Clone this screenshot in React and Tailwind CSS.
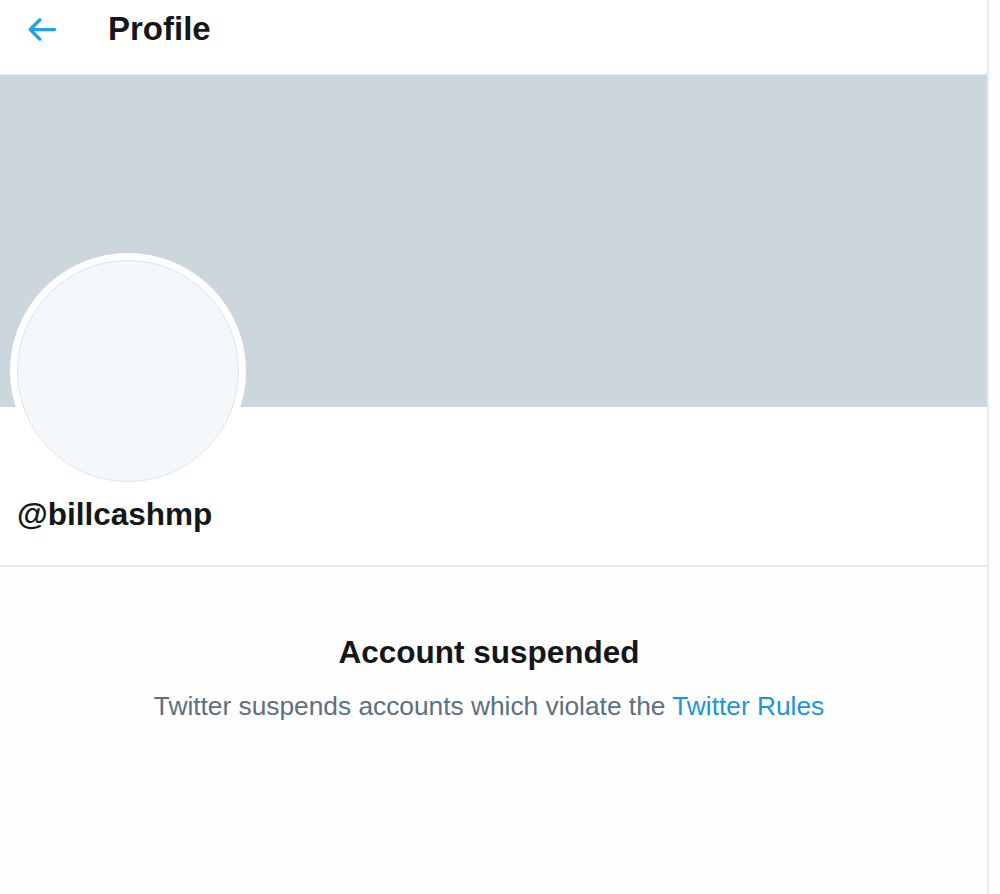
import React from 'react';

const BackArrow = () => (
  <svg viewBox="0 0 24 24" className="w-[39px] h-[39px] fill-[#1da1f2]">
    <path d="M20 11H7.414l4.293-4.293c.39-.39.39-1.023 0-1.414s-1.023-.39-1.414 0l-6 6c-.39.39-.39 1.023 0 1.414l6 6c.195.195.45.293.707.293s.512-.098.707-.293c.39-.39.39-1.023 0-1.414L7.414 13H20c.553 0 1-.447 1-1s-.447-1-1-1z" />
  </svg>
);

const App = () => {
  return (
    <div className="w-[1000px] h-[894px] bg-[#fefefe] flex font-['Liberation_Sans',Arial,sans-serif] overflow-hidden">
      <div className="w-[989px] border-r-2 border-[#e6ecf0] flex flex-col bg-[#fefefe]">
        {/* header */}
        <div className="h-[75px] bg-white border-b border-[#e6ecf0] flex items-center pl-[22px] pb-[16px]">
          <BackArrow />
          <h1 className="ml-[47px] text-[33px] leading-[38px] font-bold text-[#14171a]">Profile</h1>
        </div>

        {/* banner */}
        <div className="h-[332px] bg-[#ccd6dd]"></div>

        {/* profile info */}
        <div className="bg-white border-b-2 border-[#e6ecf0] px-[10px] pb-[33px]">
          <div className="-mt-[154px] w-[236px] h-[236px] rounded-full bg-white flex items-center justify-center">
            <div className="w-[222px] h-[222px] rounded-full bg-[#f5f8fa] border border-[#dfe5ea]"></div>
          </div>
          <p className="mt-[7px] pl-[7px] text-[31.5px] leading-[36px] font-bold text-[#14171a]">@billcashmp</p>
        </div>

        {/* suspended message */}
        <div className="flex-1 flex flex-col items-center pt-[67px] pr-[9px]">
          <h2 className="text-[31.5px] leading-[36px] font-bold text-[#14171a]">Account suspended</h2>
          <p className="mt-[20px] text-[26.3px] leading-[32px] text-[#5b7083]">
            Twitter suspends accounts which violate the <a href="#" className="text-[#1b95e0]">Twitter Rules</a>
          </p>
        </div>
      </div>
    </div>
  );
};

export default App;
